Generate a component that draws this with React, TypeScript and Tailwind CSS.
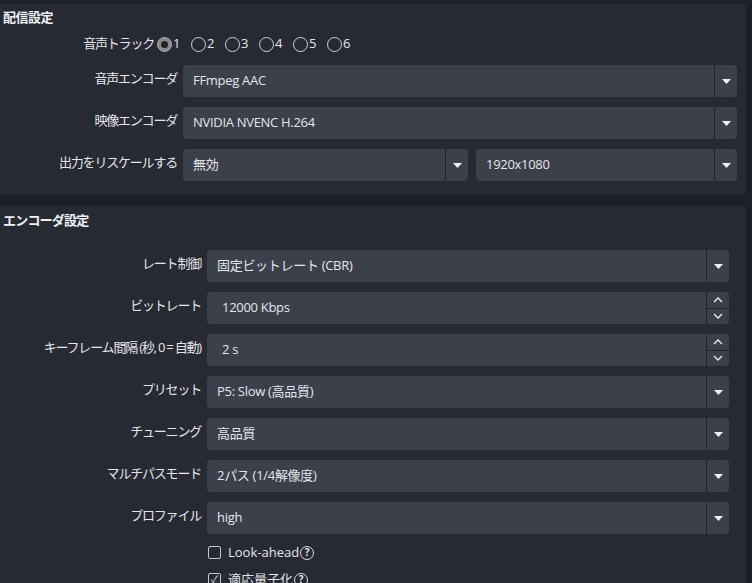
import React from "react";

const font = { fontFamily: '"Open Sans","Noto Sans CJK JP",sans-serif' };

function Arrow() {
  return (
    <div className="w-[23px] h-full border-l border-[#22242b] flex items-center justify-center">
      <svg width="9" height="5" viewBox="0 0 9 5"><path d="M0 0h9L4.5 5z" fill="#f0f0f0" /></svg>
    </div>
  );
}
function Spin() {
  return (
    <div className="w-[23px] h-full border-l border-[#22242b] flex flex-col">
      <div className="flex-1 flex items-center justify-center border-b border-[#22242b]">
        <svg width="10" height="6" viewBox="0 0 10 6"><path d="M1 5l4-4 4 4" stroke="#eee" strokeWidth="1.3" fill="none" /></svg>
      </div>
      <div className="flex-1 flex items-center justify-center">
        <svg width="10" height="6" viewBox="0 0 10 6"><path d="M1 1l4 4 4-4" stroke="#eee" strokeWidth="1.3" fill="none" /></svg>
      </div>
    </div>
  );
}
function Field({ text, spin, cls = "flex-1" }: { text: string; spin?: boolean; cls?: string }) {
  return (
    <div className={`${cls} h-[32px] bg-[#3c404b] rounded-[4px] flex items-center`}>
      <div className={`flex-1 ${spin ? "pl-[15px]" : "pl-[10px]"} text-[13px] text-[#e4e5ea] tracking-[-0.3px]`}>{text}</div>
      {spin ? <Spin /> : <Arrow />}
    </div>
  );
}
function Row({ label, lw, children }: { label: string; lw: string; children: React.ReactNode }) {
  return (
    <div className="flex items-center h-[32px]">
      <div className={`${lw} pr-[6px] text-right text-[13px] text-[#e4e5ea] -mt-[4px] tracking-[-1.2px]`}>{label}</div>
      {children}
    </div>
  );
}
function Radio({ n, on }: { n: number; on?: boolean }) {
  return (
    <div className="flex items-center w-[30px]">
      <div className={`w-[15px] h-[15px] rounded-full border ${on ? "border-[#aaa] bg-[#888] flex items-center justify-center" : "border-[#d0d0d0]"}`}>
        {on && <div className="w-[7px] h-[7px] rounded-full bg-[#222]" />}
      </div>
      <span className="ml-[1px] text-[13px] text-[#e4e5ea]">{n}</span>
    </div>
  );
}

export default function App() {
  return (
    <div className="w-[752px] h-[583px] bg-[#1e2027] overflow-hidden pt-[4px]" style={font}>
      <div className="w-[746px] bg-[#272a33] rounded-r-[4px] pb-[14px]">
        <div className="pl-[3px] pt-[4px] h-[30px] text-[13px] font-semibold text-[#eef0f4] tracking-[-0.5px]">配信設定</div>
        <div className="flex flex-col gap-[10px] pr-[9px]">
          <div className="flex items-center h-[22px] -mt-[1px]">
            <div className="w-[157px] pr-[3px] text-right text-[13px] text-[#e4e5ea] tracking-[-1.2px]">音声トラック</div>
            <div className="flex gap-[4px]">
              <Radio n={1} on /><Radio n={2} /><Radio n={3} /><Radio n={4} /><Radio n={5} /><Radio n={6} />
            </div>
          </div>
          <Row label="音声エンコーダ" lw="w-[183px]"><Field text="FFmpeg AAC" /></Row>
          <Row label="映像エンコーダ" lw="w-[183px]"><Field text="NVIDIA NVENC H.264" /></Row>
          <Row label="出力をリスケールする" lw="w-[183px]">
            <Field text="無効" cls="w-[285px] mr-[8px]" />
            <Field text="1920x1080" spin={false} />
          </Row>
        </div>
      </div>
      <div className="mt-[11px] w-[746px] h-[400px] bg-[#272a33] rounded-tr-[4px]">
        <div className="pl-[3px] pt-[5px] h-[44px] text-[13px] font-semibold text-[#eef0f4] tracking-[-0.8px]">エンコーダ設定</div>
        <div className="flex flex-col gap-[10px] pr-[17px]">
          <Row label="レート制御" lw="w-[207px]"><Field text="固定ビットレート (CBR)" /></Row>
          <Row label="ビットレート" lw="w-[207px]"><Field text="12000 Kbps" spin /></Row>
          <Row label="キーフレーム間隔 (秒, 0 = 自動)" lw="w-[207px]"><Field text="2 s" spin /></Row>
          <Row label="プリセット" lw="w-[207px]"><Field text="P5: Slow (高品質)" /></Row>
          <Row label="チューニング" lw="w-[207px]"><Field text="高品質" /></Row>
          <Row label="マルチパスモード" lw="w-[207px]"><Field text="2パス (1/4解像度)" /></Row>
          <Row label="プロファイル" lw="w-[207px]"><Field text="high" /></Row>
          <div className="pl-[208px] flex flex-col gap-[10px] text-[13px] text-[#e4e5ea]">
            <div className="flex items-center h-[17px]">
              <div className="w-[13px] h-[13px] border border-[#c8c8c8] rounded-[2px] mr-[7px]" />
              Look-ahead<span className="ml-[1px] w-[14px] h-[14px] rounded-full border-[1.5px] border-[#ddd] text-[10px] font-bold flex items-center justify-center">?</span>
            </div>
            <div className="flex items-center h-[17px]">
              <div className="w-[13px] h-[13px] border border-[#c8c8c8] rounded-[2px] mr-[7px] text-[10px] flex items-center justify-center">✓</div>
              適応量子化<span className="ml-[1px] w-[14px] h-[14px] rounded-full border-[1.5px] border-[#ddd] text-[10px] font-bold flex items-center justify-center">?</span>
            </div>
          </div>
        </div>
      </div>
    </div>
  );
}
